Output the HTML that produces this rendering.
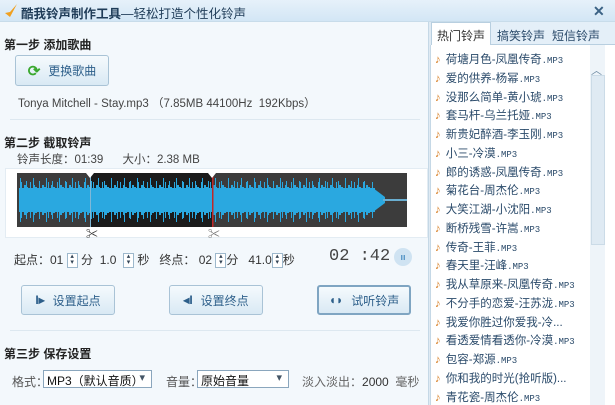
<!DOCTYPE html>
<html><head><meta charset="utf-8"><style>
*{margin:0;padding:0;box-sizing:border-box}
body{width:615px;height:405px;overflow:hidden;background:#f3f8fc;font-family:"Liberation Sans","Noto Sans CJK SC",sans-serif;font-size:12px;color:#333;position:relative}
.a{position:absolute;white-space:nowrap}
.title{left:0;top:0;width:615px;height:22px;background:linear-gradient(#e6f1fa,#d3e6f5);border-bottom:1px solid #c8dcea}
.h{font-weight:bold;color:#222;font-size:12px}
.btn{position:absolute;border:1px solid #a9c3d6;border-radius:3px;background:linear-gradient(#f5fafd,#d9e9f4);color:#2d5f8a;font-size:12px;display:flex;align-items:center;justify-content:center;gap:8px}
.sp{display:inline-block;width:11px;height:15px;border:1px solid #9db8cc;background:#fff;vertical-align:middle;font-size:7px;line-height:6px;text-align:center;color:#345}
.sel{position:absolute;height:18px;border:1px solid #8aa6bd;background:#fff;font-size:12px;padding:1px 3px;color:#111}
.sel:after{content:"▾";position:absolute;right:6px;top:0;color:#456;font-size:11px}
.list{left:430px;top:45px;width:160px;height:360px;background:#fff;border-left:1px solid #c5d8e6}
.it{position:absolute;left:6px;font-size:11.5px;color:#2a4a6a;white-space:nowrap}
.it b{color:#d9822b;font-weight:normal;margin-right:5px}
.it s{text-decoration:none;font-size:9px;font-family:"Liberation Mono",monospace}
</style></head><body>
<div class="a title"></div>
<svg class="a" style="left:4px;top:3px" width="14" height="16"><path d="M1 10 L6 14 L13 1 L6 9 Z" fill="#f0a020"/></svg>
<div class="a" style="left:21px;top:3px;font-size:12.5px;color:#1f3c58"><b>酷我铃声制作工具</b>—轻松打造个性化铃声</div>
<div class="a" style="left:593px;top:3px;font-size:14px;font-weight:bold;color:#3b6285">✕</div>

<div class="a" style="left:428px;top:22px;width:3px;height:383px;background:#dfeaf3;border-left:1px solid #c5d8e6"></div>
<div class="a" style="left:431px;top:22px;width:184px;height:23px;background:#e4eff8;border-bottom:1px solid #b8cfe0"></div>
<div class="a" style="left:431px;top:22px;width:60px;height:24px;background:#fff;border:1px solid #b8cfe0;border-bottom:none;font-size:12px;padding:4px 0 0 5px;color:#333">热门铃声</div>
<div class="a" style="left:497px;top:27px;font-size:12px;color:#2a4a6a">搞笑铃声</div>
<div class="a" style="left:552px;top:27px;font-size:12px;color:#2a4a6a">短信铃声</div>
<div class="a list"></div>
<div class="a" style="left:590px;top:45px;width:15px;height:360px;background:#eef4f9"></div>
<div class="a" style="left:591px;top:62px;font-size:11px;color:#6d8aa3">︿</div>
<div class="a" style="left:591px;top:75px;width:14px;height:170px;background:#dfeaf3;border:1px solid #cbdbe7"></div>
<div class="a" style="left:605px;top:45px;width:10px;height:360px;background:#fff"></div>

<div class="it a" style="top:51px;left:435px"><b>♪</b>荷塘月色-凤凰传奇<s>.MP3</s></div>
<div class="it a" style="top:70px;left:435px"><b>♪</b>爱的供养-杨幂<s>.MP3</s></div>
<div class="it a" style="top:89px;left:435px"><b>♪</b>没那么简单-黄小琥<s>.MP3</s></div>
<div class="it a" style="top:107px;left:435px"><b>♪</b>套马杆-乌兰托娅<s>.MP3</s></div>
<div class="it a" style="top:126px;left:435px"><b>♪</b>新贵妃醉酒-李玉刚<s>.MP3</s></div>
<div class="it a" style="top:145px;left:435px"><b>♪</b>小三-冷漠<s>.MP3</s></div>
<div class="it a" style="top:164px;left:435px"><b>♪</b>郎的诱惑-凤凰传奇<s>.MP3</s></div>
<div class="it a" style="top:182px;left:435px"><b>♪</b>菊花台-周杰伦<s>.MP3</s></div>
<div class="it a" style="top:201px;left:435px"><b>♪</b>大笑江湖-小沈阳<s>.MP3</s></div>
<div class="it a" style="top:220px;left:435px"><b>♪</b>断桥残雪-许嵩<s>.MP3</s></div>
<div class="it a" style="top:239px;left:435px"><b>♪</b>传奇-王菲<s>.MP3</s></div>
<div class="it a" style="top:257px;left:435px"><b>♪</b>春天里-汪峰<s>.MP3</s></div>
<div class="it a" style="top:276px;left:435px"><b>♪</b>我从草原来-凤凰传奇<s>.MP3</s></div>
<div class="it a" style="top:295px;left:435px"><b>♪</b>不分手的恋爱-汪苏泷<s>.MP3</s></div>
<div class="it a" style="top:314px;left:435px"><b>♪</b>我爱你胜过你爱我-冷...</div>
<div class="it a" style="top:332px;left:435px"><b>♪</b>看透爱情看透你-冷漠<s>.MP3</s></div>
<div class="it a" style="top:351px;left:435px"><b>♪</b>包容-郑源<s>.MP3</s></div>
<div class="it a" style="top:370px;left:435px"><b>♪</b>你和我的时光(抢听版)...</div>
<div class="it a" style="top:389px;left:435px"><b>♪</b>青花瓷-周杰伦<s>.MP3</s></div>

<div class="a h" style="left:4px;top:36px">第一步 添加歌曲</div>
<div class="btn" style="left:15px;top:55px;width:94px;height:31px"><span style="color:#3aa82e;font-size:15px;font-weight:bold">⟳</span>更换歌曲</div>
<div class="a" style="left:18px;top:95px;font-size:11.5px;color:#444">Tonya Mitchell - Stay.mp3 （7.85MB 44100Hz&nbsp; 192Kbps）</div>
<div class="a" style="left:10px;top:119px;width:410px;height:1px;background:#dde8f0"></div>
<div class="a h" style="left:4px;top:134px">第二步 截取铃声</div>
<div class="a" style="left:17px;top:151px;font-size:11.5px;color:#444">铃声长度：01:39&nbsp;&nbsp;&nbsp;&nbsp;&nbsp;&nbsp;大小：2.38 MB</div>

<div class="a" style="left:5px;top:168px;width:423px;height:70px;background:#fff;border:1px solid #e3ecf3"></div>
<svg class="a" style="left:17px;top:173px" width="390" height="54">
<defs><pattern id="p" width="9" height="54" patternUnits="userSpaceOnUse">
<rect x="0" y="14" width="2" height="26" fill="#2aa8e0"/><rect x="2" y="19" width="2" height="16" fill="#2aa8e0"/><rect x="4" y="9" width="1" height="36" fill="#2aa8e0"/><rect x="5" y="17" width="2" height="21" fill="#2aa8e0"/><rect x="7" y="12" width="2" height="30" fill="#2aa8e0"/></pattern>
<pattern id="q" width="13" height="54" patternUnits="userSpaceOnUse"><rect x="3" y="5" width="1" height="44" fill="#2aa8e0"/><rect x="9" y="8" width="1" height="38" fill="#2aa8e0"/></pattern></defs>
<rect width="390" height="54" fill="#3c3c3c"/>
<rect x="73" width="122" height="54" fill="#1b1b1b"/>
<rect x="2" y="15" width="356" height="24" fill="#2aa8e0"/>
<rect x="2" width="356" height="54" fill="url(#p)"/>
<rect x="2" width="350" height="54" fill="url(#q)"/>
<path d="M356 15 L368 24 L368 30 L356 39Z" fill="#2aa8e0"/>
<rect x="366" y="26" width="24" height="2" fill="#6aaed0"/>
<rect x="73" width="1" height="54" fill="#7fb8d8"/>
<rect x="195" width="1.5" height="54" fill="#c02828"/>
<path d="M69 0 L73 5 L77 0Z M191 0 L195 5 L199 0Z" fill="#fff"/>
</svg>
<div class="a" style="left:86px;top:225px;font-size:12px;font-weight:bold">✂</div>
<div class="a" style="left:208px;top:225px;font-size:12px;color:#777">✂</div>

<div class="a" style="left:14px;top:251px;font-size:12px;color:#333">起点：01 <span class="sp">▴<br>▾</span> 分&nbsp; 1.0 &nbsp;<span class="sp">▴<br>▾</span> 秒&nbsp;&nbsp; 终点： 02 <span class="sp">▴<br>▾</span>分&nbsp;&nbsp; 41.0<span class="sp">▴<br>▾</span>秒</div>
<div class="a" style="left:329px;top:247px;font-size:17px;color:#444;font-family:'Liberation Mono',monospace">02 :42</div>
<div class="a" style="left:394px;top:248px;width:18px;height:18px;border-radius:50%;background:#cfe3f2;color:#4d8fc3;font-size:9px;text-align:center;line-height:18px;font-weight:bold">ıı</div>

<div class="btn" style="left:21px;top:285px;width:94px;height:30px"><span style="font-weight:bold;color:#2d5f8a">I▸</span>设置起点</div>
<div class="btn" style="left:169px;top:285px;width:94px;height:30px"><span style="font-weight:bold;color:#2d5f8a">◂I</span>设置终点</div>
<div class="btn" style="left:317px;top:285px;width:94px;height:30px;border:2px solid #7fa5c2"><span style="color:#2d5f8a">◖◗</span>试听铃声</div>
<div class="a" style="left:10px;top:330px;width:410px;height:1px;background:#dde8f0"></div>
<div class="a h" style="left:4px;top:345px">第三步 保存设置</div>
<div class="a" style="left:12px;top:373px;color:#555">格式：</div>
<div class="sel" style="left:43px;top:370px;width:109px">MP3（默认音质）</div>
<div class="a" style="left:166px;top:373px;color:#555">音量：</div>
<div class="sel" style="left:197px;top:370px;width:92px">原始音量</div>
<div class="a" style="left:302px;top:373px;color:#666">淡入淡出：<b style="color:#333;font-weight:normal">2000</b>&nbsp; 毫秒</div>
</body></html>
